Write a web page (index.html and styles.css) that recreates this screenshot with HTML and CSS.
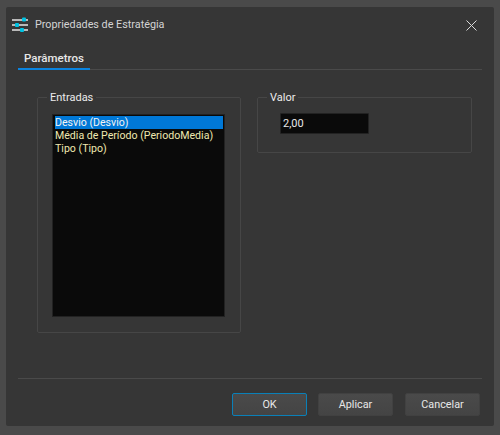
FILE: index.html
```html
<!DOCTYPE html>
<html lang="pt">
<head>
    <meta charset="UTF-8">
    <title>Propriedades de Estratégia</title>
    <link rel="stylesheet" href="styles.css">
</head>
<body>
    <div class="dialog">
        <div class="title-bar">
            <svg class="title-icon" width="17" height="15" viewBox="0 0 17 15">
                <rect x="0" y="2" width="16" height="2" fill="#b9b9b9"/>
                <rect x="0" y="7" width="16" height="2" fill="#b9b9b9"/>
                <rect x="0" y="12" width="16" height="2" fill="#b9b9b9"/>
                <rect x="10" y="0.5" width="4" height="4" rx="1" fill="#00c4e4"/>
                <rect x="3" y="6" width="4" height="4" rx="1" fill="#00c4e4"/>
                <rect x="8" y="11" width="4" height="4" rx="1" fill="#00c4e4"/>
            </svg>
            <span class="title-text">Propriedades de Estratégia</span>
            <svg class="close-icon" width="11" height="11" viewBox="0 0 11 11">
                <path d="M0.5 0.5 L10.5 10.5 M10.5 0.5 L0.5 10.5" stroke="#d8d8d8" stroke-width="1" fill="none"/>
            </svg>
        </div>

        <div class="tabs">
            <div class="tab active">Parâmetros</div>
        </div>

        <div class="content">
            <fieldset class="group group-inputs">
                <legend>Entradas</legend>
                <div class="list">
                    <div class="list-item selected">Desvio (Desvio)</div>
                    <div class="list-item">Média de Período (PeriodoMedia)</div>
                    <div class="list-item">Tipo (Tipo)</div>
                </div>
            </fieldset>
            <fieldset class="group group-value">
                <legend>Valor</legend>
                <div class="value-input">2,00</div>
            </fieldset>
        </div>

        <div class="footer">
            <button class="btn default">OK</button>
            <button class="btn">Aplicar</button>
            <button class="btn last">Cancelar</button>
        </div>
    </div>
</body>
</html>
```

FILE: styles.css
```css
* {
    box-sizing: border-box;
}

html, body {
    height: 100%;
}

body {
    margin: 0;
    padding: 7px 6px 9px;
    background: #4a4a4a;
    color: #e6e6e6;
    font-family: Roboto, "Open Sans", sans-serif;
    font-size: 11px;
    overflow: hidden;
}

.dialog {
    display: flex;
    flex-direction: column;
    height: 419px;
    background: #363636;
    border-radius: 2px;
    padding: 0 12px;
}

.title-bar {
    display: flex;
    align-items: center;
    height: 34px;
}

.title-icon {
    margin-left: -6px;
    margin-right: 6px;
}

.title-text {
    color: #d4d4d4;
    font-size: 10.8px;
}

.close-icon {
    margin-left: auto;
    margin-right: 5px;
    margin-top: 3px;
}

.tabs {
    display: flex;
    height: 29px;
    border-bottom: 1px solid #4a4a4a;
}

.tab {
    width: 72px;
    height: 29px;
    padding: 11px 0 0 6px;
    font-size: 11.5px;
    font-weight: 500;
    line-height: 13px;
    color: #e8e8e8;
    border-bottom: 2px solid #0a84e0;
}

.content {
    display: flex;
    align-items: flex-start;
    gap: 16px;
    flex: 1;
    padding: 20px 0 0 19px;
}

.group {
    margin: 0;
    min-width: 0;
    border: 1px solid #464646;
    border-radius: 2px;
}

.group legend {
    padding: 0 3px;
    font-size: 11px;
    line-height: 15px;
    color: #ececec;
}

.group-inputs {
    width: 204px;
    height: 243px;
    padding: 9px 15px 15px 14px;
}

.group-inputs legend {
    margin-left: -5px;
}

.group-value {
    width: 215px;
    height: 63px;
    padding: 8px 0 0 22px;
}

.group-value legend {
    margin-left: -13px;
}

.list {
    height: 203px;
    padding: 1px 1px 1px 2px;
    background: #0a0a0a;
    border: 1px solid #222;
}

.list-item {
    height: 13px;
    font-size: 10.6px;
    line-height: 13px;
    color: #efe8b0;
    white-space: nowrap;
}

.list-item.selected {
    background: #0078d7;
    color: #f4f4f4;
}

.value-input {
    width: 89px;
    height: 21px;
    padding-left: 2px;
    line-height: 20px;
    background: #0a0a0a;
    border: 1px solid #222;
    border-radius: 1px;
    color: #e8e8e8;
}

.footer {
    display: flex;
    justify-content: flex-end;
    gap: 11px;
    height: 48px;
    padding: 14px 2px 0 0;
    border-top: 1px solid #4a4a4a;
}

.btn {
    width: 75px;
    height: 23px;
    padding: 0;
    background: linear-gradient(#4a4a4a, #444);
    border: 1px solid #414141;
    border-radius: 2px;
    color: #e8e8e8;
    font-family: inherit;
    font-size: 10.8px;
}

.btn.default {
    border-color: #0a80b8;
}

.btn.last {
    margin-left: 1px;
}
```
